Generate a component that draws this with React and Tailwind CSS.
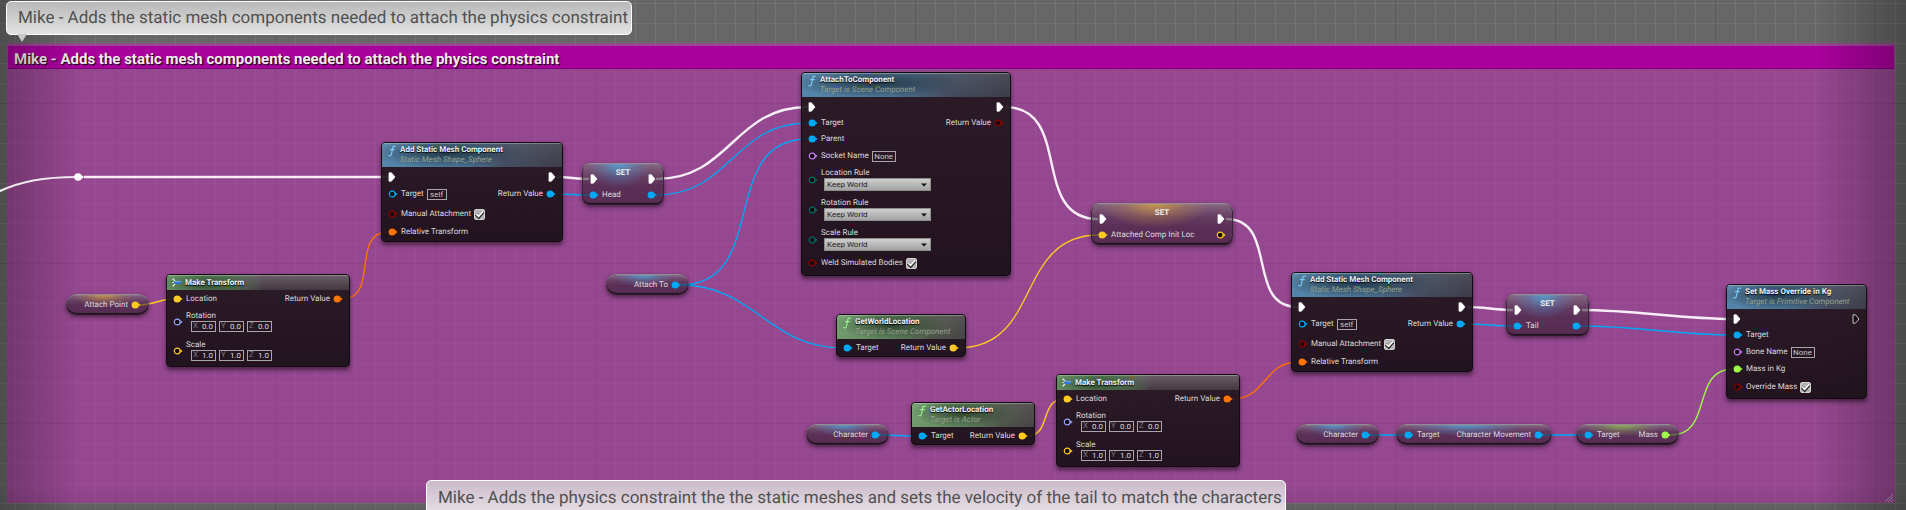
import { useId } from "react";

const COLORS = {
  blue: "#00a8f6",
  yellow: "#ffca22",
  orange: "#ff7300",
  red: "#920001",
  purple: "#c67cf5",
  teal: "#006d62",
  lavender: "#99a5ff",
  green: "#9ffc44",
};

/* ---------- pins ---------- */

function ExecPin({ hollow, className = "" }) {
  return (
    <svg viewBox="0 0 8 10" className={`h-[10px] w-2 shrink-0 ${className}`} aria-hidden="true">
      <path
        d="M1 .8H3.4L7 5 3.4 9.2H1z"
        fill={hollow ? "#140d13" : "#fff"}
        stroke={hollow ? "#d8d8d8" : "#fff"}
        strokeWidth={hollow ? 0.9 : 0.8}
        strokeLinejoin="round"
      />
    </svg>
  );
}

function DataPin({ color, hollow }) {
  const c = COLORS[color];
  return (
    <svg viewBox="0 0 10 8" className="h-2 w-[10px] shrink-0" aria-hidden="true">
      <path d="M7.2 2.2 9.7 4 7.2 5.8z" fill={c} />
      {hollow ? (
        <circle cx="4.2" cy="4" r="2.9" fill="#150c12" stroke={c} strokeWidth="1.2" />
      ) : (
        <circle cx="4.2" cy="4" r="3.6" fill={c} />
      )}
    </svg>
  );
}

function Pin({ type, hollow }) {
  return type === "exec" ? <ExecPin hollow={hollow} /> : <DataPin color={type} hollow={hollow} />;
}

/* ---------- form parts ---------- */

function TextField({ id, value, label, className }) {
  return (
    <input
      id={id}
      aria-label={label}
      defaultValue={value}
      className={`h-[11px] border border-[#a9a4a8] bg-transparent text-center leading-none text-[#c9c6c8] outline-none ${className}`}
    />
  );
}

function CheckBox({ id }) {
  return (
    <span className="grid size-[11px] shrink-0">
      <input
        id={id}
        type="checkbox"
        defaultChecked
        className="peer col-start-1 row-start-1 size-[11px] appearance-none rounded-[2px] border border-[#d2d2d2] bg-[#b4b4b4]"
      />
      <svg
        viewBox="0 0 11 11"
        className="pointer-events-none invisible col-start-1 row-start-1 size-[11px] peer-checked:visible"
        aria-hidden="true"
      >
        <path d="M2 5.4 4.7 8.2 9.2 3" fill="none" stroke="#2a2a2a" strokeWidth="3" />
        <path d="M2.3 5.2 4.6 7.4 9 2.4" fill="none" stroke="#fff" strokeWidth="1.6" />
      </svg>
    </span>
  );
}

function Combo({ id }) {
  return (
    <span className="grid">
      <select
        id={id}
        defaultValue="Keep World"
        className="col-start-1 row-start-1 h-[13px] w-[107px] appearance-none border border-[#8d8d8d] bg-linear-to-b from-[#cfcfcf] to-[#a3a3a3] pl-[2px] leading-none text-[#1c1c1c]"
      >
        <option>Keep World</option>
        <option>Keep Relative</option>
        <option>Snap to Target</option>
      </select>
      <svg
        viewBox="0 0 6 4"
        className="pointer-events-none col-start-1 row-start-1 mr-1 h-1 w-[6px] self-center justify-self-end"
        aria-hidden="true"
      >
        <path d="M0 .4H6L3 3.6z" fill="#111" />
      </svg>
    </span>
  );
}

/* ---------- rows ---------- */

function InRow({ type, hollow, label, text, textWidth, check, h = "h-4" }) {
  const id = useId();
  const control = text || check;
  return (
    <div className={`flex items-center gap-[3px] ${h}`}>
      <Pin type={type} hollow={hollow} />
      {label && (control ? <label htmlFor={id}>{label}</label> : <span>{label}</span>)}
      {text && <TextField id={id} value={text} className={textWidth} />}
      {check && <CheckBox id={id} />}
    </div>
  );
}

function OutRow({ type, hollow, label, h = "h-4" }) {
  return (
    <div className={`flex items-center justify-end gap-[3px] ${h}`}>
      {label && <span>{label}</span>}
      <Pin type={type} hollow={hollow} />
    </div>
  );
}

function EnumRow({ label }) {
  const id = useId();
  return (
    <div className="flex h-[30px] items-center gap-[3px]">
      <Pin type="teal" hollow />
      <div className="flex flex-col pb-px">
        <label htmlFor={id} className="leading-[10px]">
          {label}
        </label>
        <span className="pl-[3px]">
          <Combo id={id} />
        </span>
      </div>
    </div>
  );
}

function VectorRow({ type, label, value }) {
  return (
    <div className="flex h-[29px] items-center gap-[3px]">
      <Pin type={type} hollow />
      <div className="flex flex-col pb-px">
        <span className="leading-[10px]">{label}</span>
        <div className="flex gap-[3px] pl-[5px]">
          {["X", "Y", "Z"].map((axis) => (
            <label key={axis} className="flex h-[11px] w-[25px] items-center border border-[#a9a4a8] pr-[2px] pl-px">
              <span className="text-[#7c767b]">{axis}</span>
              <input
                defaultValue={value}
                className="w-full min-w-0 bg-transparent text-right leading-none text-[#dedcde] outline-none"
              />
            </label>
          ))}
        </div>
      </div>
    </div>
  );
}

/* ---------- nodes ---------- */

const HEADERS = {
  blue: "bg-[radial-gradient(ellipse_42%_65%_at_36%_40%,rgba(22,38,50,.8)_0%,rgba(30,50,66,.5)_50%,transparent_100%),linear-gradient(180deg,rgba(255,255,255,.08),transparent),linear-gradient(90deg,#5384aa_0%,#4d799b_42%,#434d61_68%,#3d3c48_100%)]",
  green:
    "bg-[radial-gradient(ellipse_42%_65%_at_42%_40%,rgba(28,42,28,.75)_0%,rgba(40,60,40,.45)_50%,transparent_100%),linear-gradient(180deg,rgba(255,255,255,.08),transparent),linear-gradient(90deg,#6f996b_0%,#60855e_45%,#4e5449_74%,#474345_100%)]",
  pure: "bg-[radial-gradient(ellipse_28%_90%_at_22%_60%,rgba(35,55,35,.75)_0%,transparent_100%),linear-gradient(90deg,#6f9a6c_0%,#5f8460_32%,transparent_52%),linear-gradient(180deg,#6b5e69_0%,#43393f_100%)]",
};

function Node({ at, tone, title, subtitle, left, right }) {
  const pure = tone === "pure";
  return (
    <section
      className={`absolute overflow-hidden rounded-[4px] border border-[#120b11] bg-linear-to-b from-[#23181f]/92 to-[#190f17]/93 text-[8px] leading-[10px] text-[#dcdadc] shadow-[0_3px_4px_rgba(0,0,0,.5)] ${at}`}
    >
      <header
        className={`flex shadow-[inset_0_1px_0_rgba(255,255,255,.28)] ${HEADERS[tone]} ${pure ? "h-[15px] items-center gap-1 pl-[5px]" : "h-6 gap-1 pt-[2px] pl-[6px]"}`}
      >
        {pure ? (
          <svg viewBox="0 0 9 9" className="size-[9px] shrink-0" aria-hidden="true">
            <path d="M.6.6 3 3M.6 8.4 3 6" stroke="#e8eef5" strokeWidth="1.3" />
            <path d="M.3 4.5h2" stroke="#cfd8e5" strokeWidth="1" />
            <path d="M2.6 3H9V6H2.6z" fill="#2f77d6" />
            <path d="M3 3.4h6" stroke="#84b6f4" strokeWidth=".8" />
          </svg>
        ) : (
          <svg viewBox="0 0 8 12" className="h-3 w-2 shrink-0" aria-hidden="true">
            <path
              d="M7.4 1.4C5.8.3 4.9 1.6 4.6 3.4L3.5 9C3.2 10.7 2.2 11.4.8 10.6M2.4 4.6H6.3"
              fill="none"
              stroke={tone === "green" ? "#97f08c" : "#7cc8f7"}
              strokeWidth="1.2"
              strokeLinecap="round"
            />
          </svg>
        )}
        <div>
          <h2 className="font-bold whitespace-nowrap text-[#eef0f2] [text-shadow:0_1px_1px_#000]">{title}</h2>
          {subtitle && <p className="whitespace-nowrap text-[#95a08c] italic">{subtitle}</p>}
        </div>
      </header>
      <div
        className={`flex justify-between px-[6px] whitespace-nowrap ${pure || tone === "green" ? "pt-px" : "pt-[2px]"}`}
      >
        <div>{left}</div>
        <div>{right}</div>
      </div>
    </section>
  );
}

const SHELLS = {
  blue: "bg-[radial-gradient(ellipse_38%_60%_at_45%_0%,rgba(72,170,225,.8),rgba(72,150,210,.3)_55%,transparent),linear-gradient(180deg,rgba(130,120,130,.7)_0%,rgba(70,52,68,.62)_35%,rgba(52,32,50,.6)_55%,rgba(52,30,50,.65)_100%)]",
  yellow:
    "bg-[radial-gradient(ellipse_38%_60%_at_45%_0%,rgba(215,165,60,.8),rgba(200,145,60,.3)_55%,transparent),linear-gradient(180deg,rgba(130,120,130,.7)_0%,rgba(70,52,68,.62)_35%,rgba(52,32,50,.6)_55%,rgba(52,30,50,.65)_100%)]",
  green:
    "bg-[radial-gradient(ellipse_38%_60%_at_45%_0%,rgba(145,200,75,.8),rgba(135,180,75,.3)_55%,transparent),linear-gradient(180deg,rgba(130,120,130,.7)_0%,rgba(70,52,68,.62)_35%,rgba(52,32,50,.6)_55%,rgba(52,30,50,.65)_100%)]",
};

const SHELL_BASE =
  "absolute text-[8px] leading-[10px] whitespace-nowrap text-[#dcdadc] shadow-[inset_0_1px_1px_rgba(255,255,255,.55),inset_0_0_0_1px_#2c1a2b,inset_0_-2px_1px_#1e101d,0_2px_4px_rgba(0,0,0,.5)]";

function Pill({ at, tone, input, label, pin }) {
  return (
    <section
      className={`flex h-[21px] items-center rounded-full px-2 ${input ? "justify-between" : "justify-end"} ${SHELL_BASE} ${SHELLS[tone]} ${at}`}
    >
      {input && <InRow type="blue" label={input} />}
      <OutRow type={pin} label={label} />
    </section>
  );
}

function SetNode({ at, tone, label, pin, hollow }) {
  return (
    <section className={`h-[42px] rounded-lg px-[7px] ${SHELL_BASE} ${SHELLS[tone]} ${at}`}>
      <div className="flex h-6 justify-between px-px">
        <ExecPin className="mb-[3px] self-end" />
        <h2 className="pt-[5px] font-bold text-[#eceaec]">SET</h2>
        <ExecPin className="mb-[3px] self-end" />
      </div>
      <div className="flex justify-between">
        <InRow type={pin} label={label} />
        <OutRow type={pin} hollow={hollow} />
      </div>
    </section>
  );
}

function AddStaticMesh({ at }) {
  return (
    <Node
      at={`h-[100px] w-[182px] ${at}`}
      tone="blue"
      title="Add Static Mesh Component"
      subtitle="Static Mesh Shape_Sphere"
      left={
        <>
          <InRow type="exec" />
          <InRow type="blue" hollow label="Target" text="self" textWidth="w-5" h="h-[18px]" />
          <InRow type="red" hollow label="Manual Attachment" check h="h-[22px]" />
          <InRow type="orange" label="Relative Transform" h="h-[14px]" />
        </>
      }
      right={
        <>
          <OutRow type="exec" />
          <OutRow type="blue" label="Return Value" h="h-[18px]" />
        </>
      }
    />
  );
}

function MakeTransform({ at }) {
  return (
    <Node
      at={`h-[93px] w-[184px] ${at}`}
      tone="pure"
      title="Make Transform"
      left={
        <>
          <InRow type="yellow" label="Location" />
          <VectorRow type="lavender" label="Rotation" value="0.0" />
          <VectorRow type="yellow" label="Scale" value="1.0" />
        </>
      }
      right={<OutRow type="orange" label="Return Value" />}
    />
  );
}

/* ---------- wires ---------- */

const WIRES = [
  ["exec", 84, 177, 389, 177],
  ["exec", 556, 177, 589, 179],
  ["exec", 656, 179, 808, 107],
  ["exec", 1005, 107, 1098, 219],
  ["exec", 1226, 219, 1298, 307],
  ["exec", 1467, 307, 1513, 310],
  ["exec", 1582, 310, 1733, 319],
  ["blue", 556, 194, 589, 195],
  ["blue", 656, 195, 808, 123],
  ["blue", 680, 285, 808, 139],
  ["blue", 680, 285, 843, 348],
  ["blue", 880, 435, 918, 436],
  ["blue", 1466, 324, 1513, 326],
  ["blue", 1582, 326, 1733, 335],
  ["blue", 1370, 435, 1404, 435],
  ["blue", 1543, 435, 1584, 435],
  ["yellow", 140, 305, 173, 299],
  ["yellow", 958, 348, 1099, 235],
  ["yellow", 1027, 436, 1064, 399],
  ["orange", 342, 299, 388, 232],
  ["orange", 1232, 399, 1298, 362],
  ["green", 1671, 435, 1733, 369],
];

function Wires() {
  return (
    <svg width="1906" height="510" className="absolute top-0 left-0" fill="none" aria-hidden="true">
      {WIRES.map(([type, x1, y1, x2, y2]) => {
        const c = (Math.abs(x2 - x1) + Math.abs(y2 - y1)) / 3;
        return (
          <path
            key={`${x1}-${y1}-${x2}-${y2}`}
            d={`M${x1} ${y1}C${x1 + c} ${y1} ${x2 - c} ${y2} ${x2} ${y2}`}
            stroke={type === "exec" ? "#f7eef6" : COLORS[type]}
            strokeWidth={type === "exec" ? 2.4 : 1.4}
          />
        );
      })}
      <path d="M-4 193C20 181 44 177 78 177" stroke="#f0e8ef" strokeWidth="2.2" />
      <circle cx="78" cy="177" r="3.8" fill="#fff" />
      <path d="M80 174 84 177 80 180z" fill="#fff" />
    </svg>
  );
}

const GRID =
  "bg-[linear-gradient(90deg,rgba(0,0,0,.2)_1px,transparent_1px),linear-gradient(rgba(0,0,0,.2)_1px,transparent_1px),linear-gradient(90deg,rgba(255,255,255,.07)_1px,transparent_1px),linear-gradient(rgba(255,255,255,.07)_1px,transparent_1px)] bg-size-[160px_160px,160px_160px,20px_20px,20px_20px] bg-position-[115px_0,0_103px,15px_0,0_3px]";

export default function App() {
  return (
    <main
      className={`relative h-screen min-h-[510px] w-full overflow-hidden bg-[#676767] font-[Roboto,sans-serif] [text-rendering:geometricPrecision] ${GRID}`}
    >
      <div className="flex h-[503px] flex-col pt-[43px] pr-[11px] pl-[7px]">
        <section className="flex grow flex-col bg-[#c02bb4]/52 px-px pt-[3px]">
          <h1 className="h-[23px] border-b border-[#85007d] bg-[#aa009c] pl-[6px] text-[15px] leading-[26px] font-bold text-[#f3e9f2] [text-shadow:1px_1px_1px_#000]">
            Mike - Adds the static mesh components needed to attach the physics constraint
          </h1>
          <svg viewBox="0 0 9 8" className="mt-auto mb-px h-2 w-[9px] self-end" stroke="#b9a5b7" aria-hidden="true">
            <path d="M0 8 8 0M3 8 8 3M6 8 8 6" />
          </svg>
        </section>
      </div>

      <div className="pointer-events-none absolute inset-0 bg-[linear-gradient(90deg,rgba(0,0,0,.25),transparent_80px),linear-gradient(270deg,rgba(0,0,0,.28),transparent_90px),linear-gradient(0deg,rgba(0,0,0,.08),transparent_24px)]" />

      <Wires />

      <Pill at="top-[294px] left-[66px] w-[83px]" tone="yellow" label="Attach Point" pin="yellow" />
      <MakeTransform at="top-[274px] left-[166px]" />
      <AddStaticMesh at="top-[142px] left-[381px]" />
      <SetNode at="top-[163px] left-[582px] w-[82px]" tone="blue" label="Head" pin="blue" />
      <Pill at="top-[274px] left-[606px] w-[83px]" tone="blue" label="Attach To" pin="blue" />

      <Node
        at="top-[72px] left-[801px] h-[204px] w-[210px]"
        tone="blue"
        title="AttachToComponent"
        subtitle="Target is Scene Component"
        left={
          <>
            <InRow type="exec" />
            <InRow type="blue" label="Target" />
            <InRow type="blue" label="Parent" />
            <InRow type="purple" hollow label="Socket Name" text="None" textWidth="w-6" h="h-[18px]" />
            <EnumRow label="Location Rule" />
            <EnumRow label="Rotation Rule" />
            <EnumRow label="Scale Rule" />
            <InRow type="red" hollow label="Weld Simulated Bodies" check />
          </>
        }
        right={
          <>
            <OutRow type="exec" />
            <OutRow type="red" hollow label="Return Value" />
          </>
        }
      />

      <Node
        at="top-[314px] left-[836px] h-[43px] w-[130px]"
        tone="green"
        title="GetWorldLocation"
        subtitle="Target is Scene Component"
        left={<InRow type="blue" label="Target" />}
        right={<OutRow type="yellow" label="Return Value" />}
      />
      <Pill at="top-[424px] left-[806px] w-[83px]" tone="blue" label="Character" pin="blue" />
      <Node
        at="top-[402px] left-[911px] h-[43px] w-[124px]"
        tone="green"
        title="GetActorLocation"
        subtitle="Target is Actor"
        left={<InRow type="blue" label="Target" />}
        right={<OutRow type="yellow" label="Return Value" />}
      />
      <MakeTransform at="top-[374px] left-[1056px]" />
      <SetNode
        at="top-[203px] left-[1091px] w-[142px]"
        tone="yellow"
        label="Attached Comp Init Loc"
        pin="yellow"
        hollow
      />

      <AddStaticMesh at="top-[272px] left-[1291px]" />
      <SetNode at="top-[294px] left-[1506px] w-[83px]" tone="blue" label="Tail" pin="blue" />
      <Pill at="top-[424px] left-[1296px] w-[83px]" tone="blue" label="Character" pin="blue" />
      <Pill at="top-[424px] left-[1396px] w-[156px]" tone="blue" input="Target" label="Character Movement" pin="blue" />
      <Pill at="top-[424px] left-[1576px] w-[103px]" tone="green" input="Target" label="Mass" pin="green" />

      <Node
        at="top-[284px] left-[1726px] h-[115px] w-[141px]"
        tone="blue"
        title="Set Mass Override in Kg"
        subtitle="Target is Primitive Component"
        left={
          <>
            <InRow type="exec" />
            <InRow type="blue" label="Target" />
            <InRow type="purple" hollow label="Bone Name" text="None" textWidth="w-6" h="h-[18px]" />
            <InRow type="green" label="Mass in Kg" />
            <InRow type="red" hollow label="Override Mass" check h="h-5" />
          </>
        }
        right={<OutRow type="exec" hollow />}
      />

      <aside className="absolute top-px left-[6px] rounded-[5px] border border-white bg-linear-to-b from-[#b9b9b9] to-[#e2e2e2] pr-[3px] pl-[11px] text-[17px] leading-[32px] whitespace-nowrap text-[#505050]">
        Mike - Adds the static mesh components needed to attach the physics constraint
        <svg viewBox="0 0 10 8" className="absolute top-full left-[10px] h-2 w-[10px]" aria-hidden="true">
          <path d="M0 0H10L5 8z" fill="#c9c9c9" />
        </svg>
      </aside>
      <aside className="absolute top-[480px] left-[426px] rounded-[5px] border border-white bg-linear-to-b from-[#cbbac9] to-[#e8e2e7] pr-[3px] pl-[11px] text-[17px] leading-[34px] whitespace-nowrap text-[#505050]">
        Mike - Adds the physics constraint the the static meshes and sets the velocity of the tail to match the characters
      </aside>
    </main>
  );
}
